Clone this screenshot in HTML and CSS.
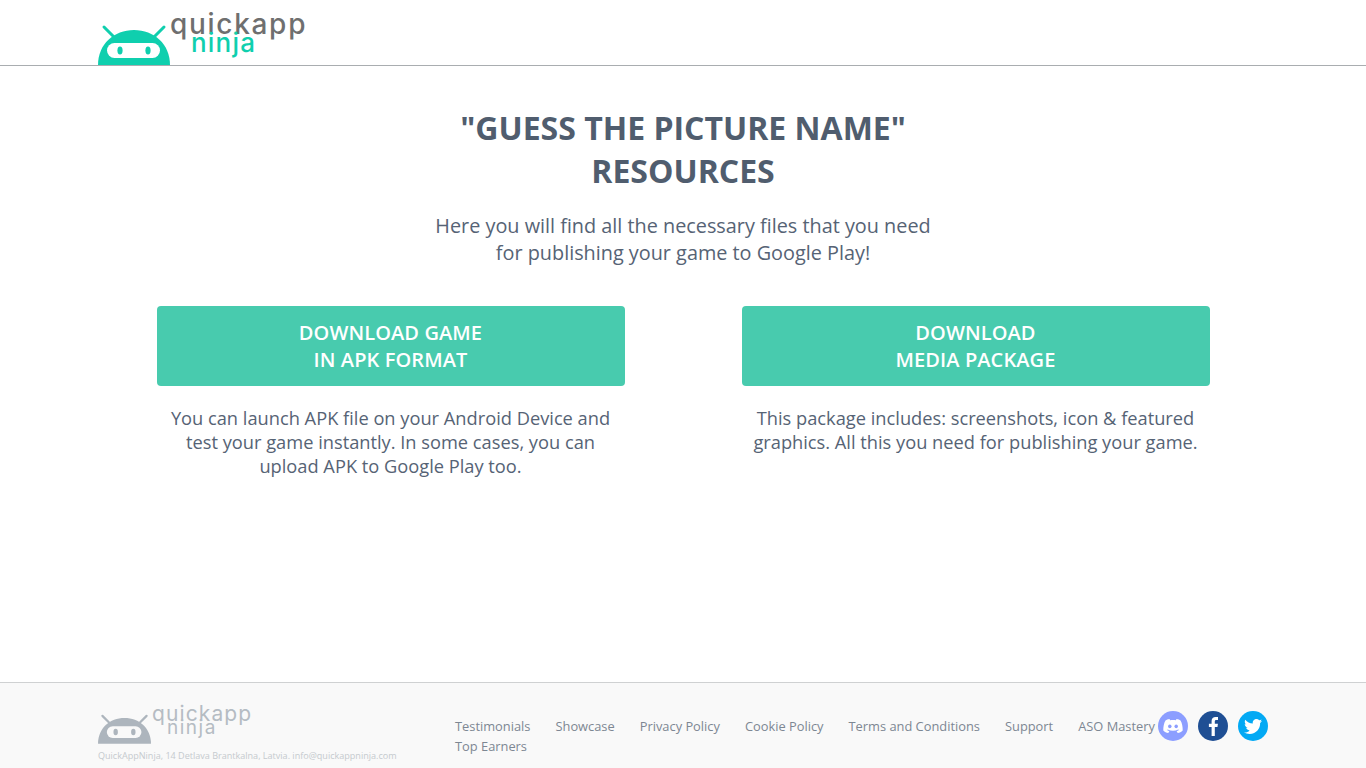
FILE: index.html
```html
<!DOCTYPE html>
<html lang="en">
<head>
<meta charset="utf-8">
<title>Resources</title>
<link rel="stylesheet" href="styles.css">
</head>
<body>
<div class="page">
<header class="header">
  <a class="logo" href="#">
    <svg class="robot" width="72" height="43" viewBox="0 0 72 43">
      <path d="M0 43C0 22 16 8 36 8s36 14 36 35z" fill="#0fcfae"/>
      <path d="M15 14L6 5M57 14l9-9" stroke="#0fcfae" stroke-width="3" stroke-linecap="round"/>
      <rect x="9" y="21" width="53" height="15" rx="7.500" fill="#fff"/>
      <ellipse cx="22" cy="28.500" rx="2.600" ry="4" fill="#0fcfae"/>
      <ellipse cx="50" cy="28.500" rx="2.600" ry="4" fill="#0fcfae"/>
    </svg>
    <span class="wordmark">
      <span class="word-top">quickapp</span>
      <span class="word-bottom">ninja</span>
    </span>
  </a>
</header>
<main class="main">
  <h1 class="title">"GUESS THE PICTURE NAME"<br>RESOURCES</h1>
  <p class="lead">Here you will find all the necessary files that you need<br>for publishing your game to Google Play!</p>
  <div class="cards">
    <section class="card">
      <a class="btn" href="#">DOWNLOAD GAME<br>IN APK FORMAT</a>
      <p class="desc">You can launch APK file on your Android Device and test your game instantly. In some cases, you can upload APK to Google Play too.</p>
    </section>
    <section class="card">
      <a class="btn" href="#">DOWNLOAD<br>MEDIA PACKAGE</a>
      <p class="desc">This package includes: screenshots, icon &amp; featured graphics. All this you need for publishing your game.</p>
    </section>
  </div>
</main>
<footer class="footer">
  <div class="foot-brand">
    <a class="logo logo-small" href="#">
      <svg class="robot" width="53" height="32" viewBox="0 0 72 43">
        <path d="M0 43C0 22 16 8 36 8s36 14 36 35z" fill="#adb5bd"/>
        <path d="M15 14L6 5M57 14l9-9" stroke="#adb5bd" stroke-width="3" stroke-linecap="round"/>
        <rect x="12" y="19" width="47" height="16" rx="8" fill="#f9f9f9"/>
        <ellipse cx="24" cy="27" rx="3" ry="4.500" fill="#adb5bd"/>
        <ellipse cx="48" cy="27" rx="3" ry="4.500" fill="#adb5bd"/>
      </svg>
      <span class="wordmark">
        <span class="word-top">quickapp</span>
        <span class="word-bottom">ninja</span>
      </span>
    </a>
    <p class="address">QuickAppNinja, 14 Detlava Brantkalna, Latvia. info@quickappninja.com</p>
  </div>
  <nav class="foot-nav">
    <a href="#">Testimonials</a>
    <a href="#">Showcase</a>
    <a href="#">Privacy Policy</a>
    <a href="#">Cookie Policy</a>
    <a href="#">Terms and Conditions</a>
    <a href="#">Support</a>
    <a href="#">ASO Mastery</a>
    <a href="#">Top Earners</a>
  </nav>
  <div class="social">
    <a class="soc soc-discord" href="#"><svg width="20" height="16" viewBox="0 0 20 16"><path d="M6.500 1C4.800 1.300 3.500 1.800 2.500 2.500 1 5 .2 8.500.3 12.600 1.600 14 3.400 14.800 5.300 15l1.100-1.900c-.9-.3-1.700-.7-2.300-1.200l.6-.4c3.500 1.600 7.100 1.600 10.600 0l.6.4c-.6.500-1.400.9-2.300 1.200l1.100 1.900c1.900-.2 3.700-1 5-2.400.1-4.100-.7-7.600-2.200-10.100-1-.7-2.300-1.200-4-1.500l-.6 1.200c-1.900-.3-3.900-.3-5.800 0z" fill="#fff"/><ellipse cx="6.800" cy="8.300" rx="1.700" ry="1.900" fill="#8c9eff"/><ellipse cx="13.200" cy="8.300" rx="1.700" ry="1.900" fill="#8c9eff"/></svg></a>
    <a class="soc soc-fb" href="#"><svg width="30" height="30" viewBox="0 0 30 30"><path d="M16.800 25v-9h2.700l.4-3.200h-3.100v-2.200c0-.9.300-1.500 1.600-1.500h1.600V6c-.3 0-1.300-.1-2.400-.1-2.400 0-4 1.400-4 4.100v2.800h-2.700V16h2.700v9z" fill="#fff"/></svg></a>
    <a class="soc soc-tw" href="#"><svg width="18" height="15" viewBox="0 0 24 20"><path d="M24 2.400c-.9.400-1.800.7-2.800.8 1-.6 1.800-1.600 2.200-2.700-1 .6-2 1-3.100 1.200C19.300.6 18 0 16.600 0c-3.200 0-5.500 3-4.800 6C7.700 5.800 4.100 3.900 1.700.9.400 3.100 1 6 3.200 7.400c-.8 0-1.600-.2-2.200-.6 0 2.300 1.600 4.400 4 4.900-.7.200-1.500.2-2.200.1.600 2 2.400 3.400 4.600 3.400C5.300 17.400 2.700 18.200 0 17.800 2.200 19.200 4.800 20 7.500 20c9.100 0 14.300-7.700 14-14.600 1-.7 1.800-1.600 2.500-3z" fill="#fff"/></svg></a>
  </div>
</footer>
</div>
</body>
</html>
```

FILE: styles.css
```css
* { box-sizing: border-box; }
html, body { margin: 0; padding: 0; }
body {
  font-family: "Open Sans", "Liberation Sans", sans-serif;
  color: #505d6e;
  background: #fff;
}
a { text-decoration: none; color: inherit; }
.page {
  display: flex;
  flex-direction: column;
  height: 768px;
  overflow: hidden;
}
.header {
  height: 66px;
  flex: none;
  padding-left: 98px;
  border-bottom: 1px solid #a9adb0;
  display: flex;
  align-items: flex-end;
}
.logo {
  display: flex;
  align-items: flex-end;
  height: 65px;
}
.robot { display: block; flex: none; }
.wordmark {
  display: flex;
  flex-direction: column;
  font-family: "Inter", sans-serif;
  align-items: flex-start;
  align-self: flex-start;
  padding-top: 12px;
}
.word-top {
  font-size: 28px;
  line-height: 24px;
  color: #6f6f6f;
  font-weight: 500;
  letter-spacing: 1.7px;
}
.word-bottom {
  font-size: 26px;
  line-height: 12px;
  margin-top: 1px;
  margin-left: 21px;
  color: #0fcfae;
  font-weight: 500;
  letter-spacing: 1.2px;
}
.main {
  flex: 1;
  padding-top: 40px;
  text-align: center;
}
.title {
  margin: 0;
  font-size: 32px;
  line-height: 43px;
  font-weight: 700;
}
.lead {
  margin: 20px 0 0;
  font-size: 19.84px;
  line-height: 27px;
  color: #566375;
}
.cards {
  display: grid;
  grid-template-columns: 468px 468px;
  justify-content: center;
  column-gap: 117px;
  margin-top: 40px;
}
.btn {
  display: block;
  height: 80px;
  padding-top: 13px;
  background: #48cbae;
  border-radius: 4px;
  color: #fff;
  font-size: 20px;
  line-height: 27px;
  font-weight: 550;
  letter-spacing: .1px;
}
.desc {
  margin: 20px 0 0;
  padding: 0 10px;
  font-size: 18.25px;
  line-height: 24px;
  color: #566375;
}
.footer {
  height: 86px;
  flex: none;
  display: flex;
  background: #f9f9f9;
  border-top: 1px solid #cfd1d2;
  padding-left: 98px;
}
.logo-small { height: 42px; margin-top: 19px; }
.foot-brand { width: 357px; flex: none; }
.logo-small .wordmark {
  margin-left: 1px;
  padding-top: 3px;
}
.logo-small .word-top {
  font-size: 21px;
  line-height: 18px;
  color: #b5bcc3;
  font-weight: 400;
  letter-spacing: 1.1px;
}
.logo-small .word-bottom {
  font-size: 19px;
  line-height: 10px;
  margin-top: 0;
  margin-left: 15px;
  color: #b5bcc3;
  font-weight: 400;
  letter-spacing: 1.5px;
}
.address {
  margin: 5px 0 0;
  font-size: 9.06px;
  line-height: 14px;
  color: #c5cace;
  white-space: nowrap;
}
.foot-nav {
  width: 703px;
  flex: none;
  padding-top: 33px;
  display: flex;
  flex-wrap: wrap;
  column-gap: 25px;
  font-size: 12.85px;
  line-height: 20px;
  color: #7d8793;
  align-content: flex-start;
}
.social {
  display: flex;
  gap: 10px;
  padding-top: 28px;
  align-items: flex-start;
}
.soc {
  width: 30px;
  height: 30px;
  border-radius: 50%;
  display: flex;
  align-items: center;
  justify-content: center;
}
.soc-discord { background: #8c9eff; }
.soc-fb { background: #1f4f94; }
.soc-tw { background: #03a9f4; }
```
